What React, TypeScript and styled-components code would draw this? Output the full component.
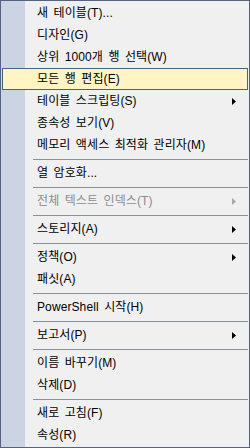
import React from "react";
import styled, { createGlobalStyle } from "styled-components";

type MenuEntry =
  | { kind: "item"; label: string; submenu?: boolean; disabled?: boolean; active?: boolean }
  | { kind: "sep" };

const entries: MenuEntry[] = [
  { kind: "item", label: "새 테이블(T)..." },
  { kind: "item", label: "디자인(G)" },
  { kind: "item", label: "상위 1000개 행 선택(W)" },
  { kind: "item", label: "모든 행 편집(E)", active: true },
  { kind: "item", label: "테이블 스크립팅(S)", submenu: true },
  { kind: "item", label: "종속성 보기(V)" },
  { kind: "item", label: "메모리 액세스 최적화 관리자(M)" },
  { kind: "sep" },
  { kind: "item", label: "열 암호화..." },
  { kind: "sep" },
  { kind: "item", label: "전체 텍스트 인덱스(T)", submenu: true, disabled: true },
  { kind: "sep" },
  { kind: "item", label: "스토리지(A)", submenu: true },
  { kind: "sep" },
  { kind: "item", label: "정책(O)", submenu: true },
  { kind: "item", label: "패싯(A)" },
  { kind: "sep" },
  { kind: "item", label: "PowerShell 시작(H)" },
  { kind: "sep" },
  { kind: "item", label: "보고서(P)", submenu: true },
  { kind: "sep" },
  { kind: "item", label: "이름 바꾸기(M)" },
  { kind: "item", label: "삭제(D)" },
  { kind: "sep" },
  { kind: "item", label: "새로 고침(F)" },
  { kind: "item", label: "속성(R)" },
];

const GlobalStyle = createGlobalStyle`
  html, body {
    margin: 0;
    padding: 0;
    background: #f0f0f0;
  }
  body {
    font-family: "Liberation Sans", "Noto Sans CJK KR", sans-serif;
  }
`;

const Menu = styled.div`
  box-sizing: border-box;
  width: 250px;
  height: 448px;
  border: 1px solid #54637f;
  padding: 1px;
  background: linear-gradient(to right, #ccd3e3 24px, #f0f0f0 24px);
  display: flex;
  flex-direction: column;
`;

const Item = styled.div<{ $active?: boolean; $disabled?: boolean }>`
  box-sizing: border-box;
  height: 22px;
  display: grid;
  grid-template-columns: 1fr 16px;
  align-items: center;
  padding-left: 34px;
  padding-right: 6px;
  border: 1px solid ${(p) => (p.$active ? "#4d6185" : "transparent")};
  background: ${(p) => (p.$active ? "#fff4c4" : "transparent")};
  color: ${(p) => (p.$disabled ? "#8d8d8d" : "#000")};
  font-size: 12px;
  letter-spacing: 0.1px;
  word-spacing: 2px;
  white-space: nowrap;
`;

const Label = styled.span`
  line-height: 20px;
`;

const Arrow = styled.svg<{ $disabled?: boolean }>`
  width: 4px;
  height: 7px;
  justify-self: end;
  margin-right: 5px;
  fill: ${(p) => (p.$disabled ? "#a8a8a8" : "#000")};
`;

const Separator = styled.div`
  height: 6px;
  padding-top: 3px;
  margin-left: 31px;
  box-sizing: border-box;
  &::before {
    content: "";
    display: block;
    height: 1px;
    background: #8a909c;
  }
`;

export default function App() {
  return (
    <>
      <GlobalStyle />
      <Menu>
        {entries.map((e, i) =>
          e.kind === "sep" ? (
            <Separator key={i} />
          ) : (
            <Item key={i} $active={e.active} $disabled={e.disabled}>
              <Label>{e.label}</Label>
              {e.submenu && (
                <Arrow $disabled={e.disabled} viewBox="0 0 4 7">
                  <polygon points="0,0 4,3.5 0,7" />
                </Arrow>
              )}
            </Item>
          )
        )}
      </Menu>
    </>
  );
}
